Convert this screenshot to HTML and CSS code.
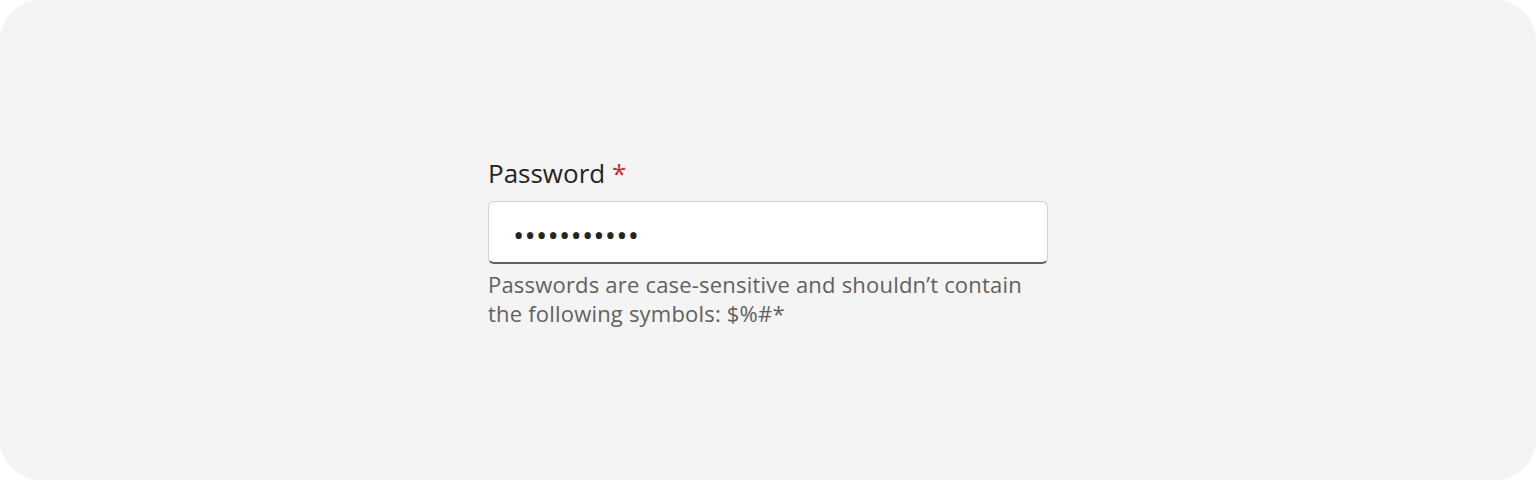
FILE: index.html
```html
<!DOCTYPE html>
<html>
<head>
<meta charset="utf-8">
<link rel="stylesheet" href="styles.css">
</head>
<body>
<div class="card">
  <div class="field">
    <label class="label" for="pw">Password <span class="req">*</span></label>
    <div class="input">
      <input id="pw" type="password" value="secretpassw" readonly>
    </div>
    <div class="hint">Passwords are case-sensitive and shouldn’t contain the following symbols: $%#*</div>
  </div>
</div>
</body>
</html>
```
FILE: styles.css
```css
html, body {
  margin: 0;
  padding: 0;
  background: #ffffff;
}
.card {
  width: 1536px;
  height: 480px;
  box-sizing: border-box;
  background: #f4f4f4;
  border-radius: 40px;
  display: flex;
  align-items: flex-start;
  justify-content: center;
  padding-top: 157px;
  font-family: "Open Sans", "Noto Sans", sans-serif;
}
.field {
  width: 560px;
  display: flex;
  flex-direction: column;
}
.label {
  font-size: 26px;
  line-height: 32px;
  color: #242424;
  margin-bottom: 12px;
}
.req {
  color: #bc2f32;
}
.input {
  height: 63px;
  box-sizing: border-box;
  background: #ffffff;
  border: 1px solid #d1d1d1;
  border-bottom: 2px solid #616161;
  border-radius: 6px;
  display: flex;
  align-items: center;
  padding: 0 24px;
}
.input input {
  border: none;
  outline: none;
  background: transparent;
  font-family: "Open Sans", sans-serif;
  font-size: 30px;
  color: #242424;
  width: 100%;
  padding: 0;
  letter-spacing: 0.2px;
  margin-top: 5px;
}
.hint {
  margin-top: 6px;
  font-size: 22px;
  line-height: 29px;
  letter-spacing: 0.2px;
  color: #616161;
}
```
